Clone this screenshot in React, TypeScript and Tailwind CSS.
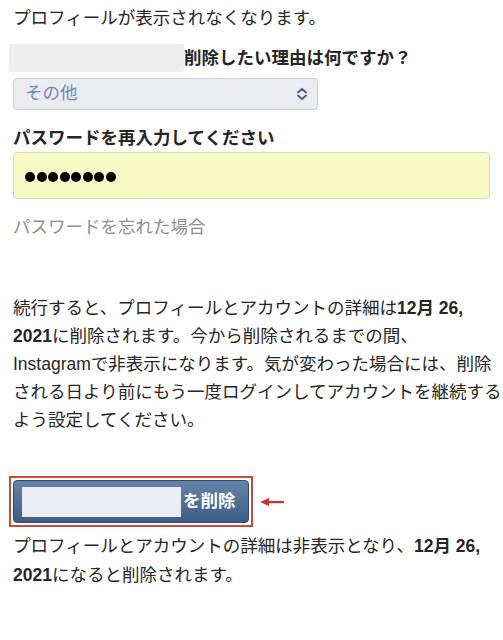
import React from "react";

export default function App() {
  return (
    <div className="w-[503px] h-[640px] overflow-hidden bg-white text-[#262626] text-[17.5px] font-['Liberation_Sans','Noto_Sans_CJK_JP',sans-serif]">
      <div className="pl-[13px] pt-[4px]">
        <p className="leading-[28px] whitespace-nowrap">プロフィールが表示されなくなります。</p>

        <div className="mt-[12px] flex items-center ml-[-4px]">
          <div className="w-[175px] h-[28px] bg-[#efefef] rounded-[2px]" />
          <span className="font-bold leading-[28px] whitespace-nowrap">削除したい理由は何ですか？</span>
        </div>

        <div className="mt-[6px] w-[305px] h-[32px] rounded-[4px] border border-[#cdd0d6] bg-[#ebecef] flex items-center justify-between pl-[11px] pr-[9px]">
          <span className="text-[#6f88b8] leading-none">その他</span>
          <svg width="12" height="14" viewBox="0 0 12 14" fill="none">
            <path d="M2 5.5 L6 1.8 L10 5.5" stroke="#3d5a8a" strokeWidth="1.8" strokeLinecap="round" strokeLinejoin="round" />
            <path d="M2 8.5 L6 12.2 L10 8.5" stroke="#3d5a8a" strokeWidth="1.8" strokeLinecap="round" strokeLinejoin="round" />
          </svg>
        </div>

        <p className="mt-[14px] font-bold leading-[28px] whitespace-nowrap">パスワードを再入力してください</p>

        <div className="w-[477px] h-[47px] rounded-[4px] border border-[#d8d9b8] bg-[#f9fbc6] flex items-center gap-[1.5px] pl-[11px] pt-[2px]">
          {[0, 1, 2, 3, 4, 5, 6, 7].map((i) => (
            <span key={i} className="w-[10px] h-[10px] rounded-full bg-black" />
          ))}
        </div>

        <p className="mt-[14px] text-[#8e8e8e] leading-[28px] whitespace-nowrap">パスワードを忘れた場合</p>

        <p className="mt-[53px] leading-[28px] whitespace-nowrap">
          続行すると、プロフィールとアカウントの詳細は<b>12月 26,</b>
          <br />
          <b>2021</b>に削除されます。今から削除されるまでの間、
          <br />
          Instagramで非表示になります。気が変わった場合には、削除
          <br />
          される日より前にもう一度ログインしてアカウントを継続する
          <br />
          よう設定してください。
        </p>

        <div className="mt-[42px] ml-[-4px] flex items-center gap-[7px]">
          <div className="border-2 border-[#cc4a38] p-[2px]">
            <div className="w-[236px] h-[43px] rounded-[4px] border border-[#2f4a6d] bg-gradient-to-b from-[#6584aa] to-[#3d5d86] flex items-center pl-[8px]">
              <div className="w-[159px] h-[30px] bg-[#e9edf3]" />
              <span className="ml-[2px] text-white font-bold leading-none">を削除</span>
            </div>
          </div>
          <svg width="24" height="10" viewBox="0 0 24 10">
            <path d="M0 5 L9 1 L9 9 Z" fill="#d2302a" />
            <rect x="8" y="4" width="16" height="2.2" fill="#d2302a" />
          </svg>
        </div>

        <p className="mt-[5px] leading-[29px] whitespace-nowrap">
          プロフィールとアカウントの詳細は非表示となり、<b>12月 26,</b>
          <br />
          <b>2021</b>になると削除されます。
        </p>
      </div>
    </div>
  );
}
